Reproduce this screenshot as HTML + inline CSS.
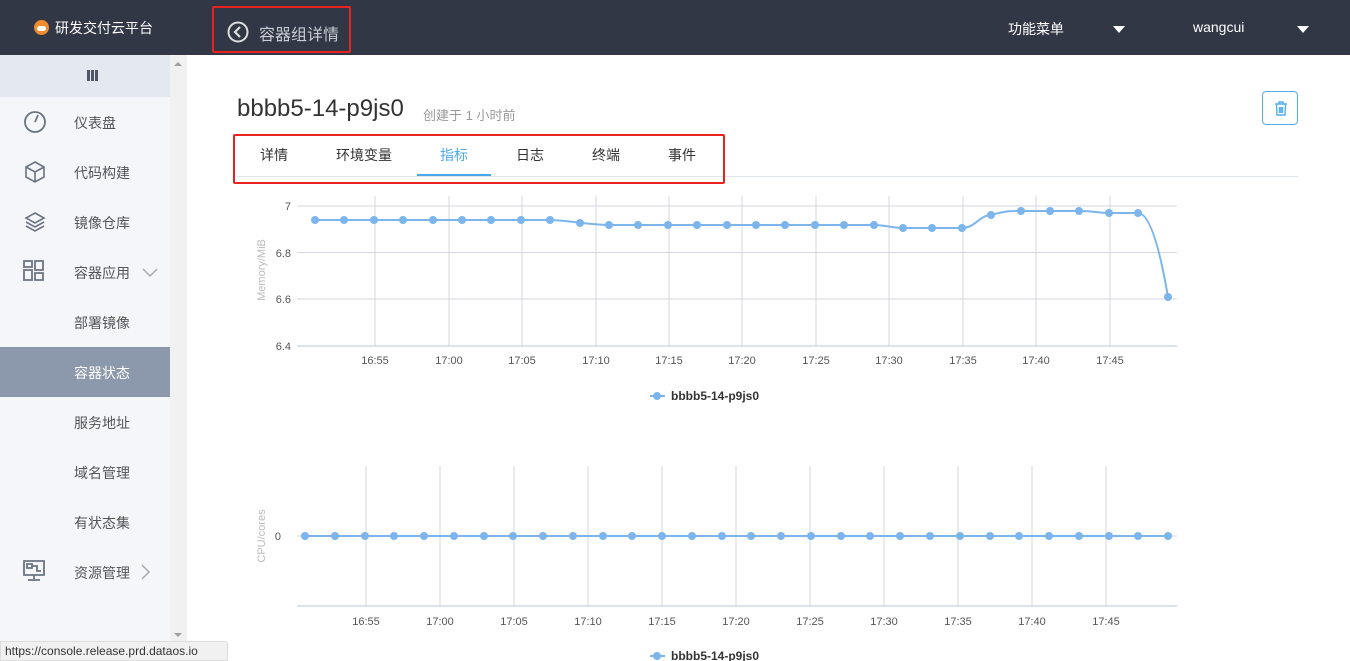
<!DOCTYPE html>
<html><head><meta charset="utf-8"><style>
*{margin:0;padding:0;box-sizing:border-box}
body{width:1350px;height:661px;overflow:hidden;background:#fff;font-family:"Liberation Sans","Noto Sans CJK SC",sans-serif;position:relative}
.top{position:absolute;left:0;top:0;width:1350px;height:55px;background:#323745;color:#fff}
.side{position:absolute;left:0;top:55px;width:170px;height:606px;background:#f4f6fa}
.scroll{position:absolute;left:170px;top:55px;width:17px;height:606px;background:#f1f1f1}
.item{position:absolute;left:74px;font-size:14px;color:#555}
.ico{position:absolute;left:23px}
.abs{position:absolute}
</style></head><body>
<div class="top">
 <div class="abs" style="left:34px;top:20px;width:15px;height:15px;border-radius:50%;background:#f08c2e"><div style="position:absolute;left:3px;top:6px;width:9px;height:5px;background:#fff;border-radius:3px"></div></div>
 <div class="abs" style="left:55px;top:18px;font-size:14px;color:#fff">研发交付云平台</div>
 <div class="abs" style="left:212px;top:6px;width:139px;height:47px;border:2px solid #e8231f;border-radius:2px"></div>
 <svg class="abs" style="left:227px;top:21px" width="22" height="22" viewBox="0 0 22 22"><circle cx="11" cy="11" r="9.5" fill="none" stroke="#ddd" stroke-width="2"/><path d="M13 6 L8 11 L13 16" fill="none" stroke="#ddd" stroke-width="2.2"/></svg>
 <div class="abs" style="left:259px;top:21px;font-size:16px;color:#c9ccd4">容器组详情</div>
 <div class="abs" style="left:1008px;top:19px;font-size:14px">功能菜单</div>
 <div class="abs" style="left:1113px;top:26px;border-left:6px solid transparent;border-right:6px solid transparent;border-top:7px solid #fff"></div>
 <div class="abs" style="left:1193px;top:19px;font-size:14px">wangcui</div>
 <div class="abs" style="left:1297px;top:26px;border-left:6px solid transparent;border-right:6px solid transparent;border-top:7px solid #fff"></div>
</div>
<div class="side">
 <div style="height:42px;background:#e4e8f0;position:relative"><div class="abs" style="left:87px;top:15px;width:3px;height:11px;background:#4f5766;box-shadow:4px 0 #4f5766,8px 0 #4f5766"></div></div>
 <svg class="ico" style="top:55px" width="24" height="24" viewBox="0 0 24 24"><circle cx="12" cy="12" r="10" fill="none" stroke="#6b7483" stroke-width="1.8"/><path d="M12 12 L15 5" stroke="#6b7483" stroke-width="1.8"/></svg>
 <div class="item" style="top:58px">仪表盘</div>
 <svg class="ico" style="top:105px" width="24" height="24" viewBox="0 0 24 24"><path d="M12 2 L21 7 L21 17 L12 22 L3 17 L3 7 Z M3 7 L12 12 L21 7 M12 12 L12 22" fill="none" stroke="#6b7483" stroke-width="1.6"/></svg>
 <div class="item" style="top:108px">代码构建</div>
 <svg class="ico" style="top:155px" width="24" height="24" viewBox="0 0 24 24"><path d="M12 3 L21 8 L12 13 L3 8 Z M3 12 L12 17 L21 12 M3 16 L12 21 L21 16" fill="none" stroke="#6b7483" stroke-width="1.6"/></svg>
 <div class="item" style="top:158px">镜像仓库</div>
 <svg class="ico" style="top:205px" width="22" height="22" viewBox="0 0 22 22"><path d="M1 1 H9 V7 H1 Z M12 1 H20 V10 H12 Z M1 10 H9 V20 H1 Z M12 13 H20 V20 H12 Z" fill="none" stroke="#6b7483" stroke-width="1.8"/></svg>
 <div class="item" style="top:208px">容器应用</div>
 <svg class="abs" style="left:142px;top:213px" width="16" height="10" viewBox="0 0 16 10"><path d="M1 1 L8 8 L15 1" fill="none" stroke="#aaa" stroke-width="1.5"/></svg>
 <div class="item" style="top:258px">部署镜像</div>
 <div style="position:absolute;left:0;top:292px;width:170px;height:50px;background:#8c98ab"></div>
 <div class="item" style="top:308px;color:#fff">容器状态</div>
 <div class="item" style="top:358px">服务地址</div>
 <div class="item" style="top:408px">域名管理</div>
 <div class="item" style="top:458px">有状态集</div>
 <svg class="ico" style="top:505px" width="22" height="22" viewBox="0 0 22 22"><path d="M1 1 H21 V15 H1 Z M11 15 V19 M5 20 H17 M4 4 H9 V8 H4 Z M9 6 H14 V11 H18" fill="none" stroke="#6b7483" stroke-width="1.8"/></svg>
 <div class="item" style="top:508px">资源管理</div>
 <svg class="abs" style="left:141px;top:509px" width="10" height="16" viewBox="0 0 10 16"><path d="M1 1 L8 8 L1 15" fill="none" stroke="#aaa" stroke-width="1.5"/></svg>
</div>
<div class="scroll"><div class="abs" style="left:4px;top:7px;border-left:4px solid transparent;border-right:4px solid transparent;border-bottom:4px solid #a0a0a0"></div><div class="abs" style="left:4px;top:578px;border-left:4px solid transparent;border-right:4px solid transparent;border-top:4px solid #a0a0a0"></div></div>
<div class="abs" style="left:0;top:641px;width:228px;height:20px;background:#f1f1f1;border:1px solid #ddd;border-radius:0 3px 0 0;font-size:12px;color:#333;padding:2px 0 0 4px">https://console.release.prd.dataos.io</div>

<div class="abs" style="left:237px;top:95px;font-size:24px;color:#333">bbbb5-14-p9js0</div>
<div class="abs" style="left:423px;top:105px;font-size:13px;color:#999">创建于 1 小时前</div>
<div class="abs" style="left:1262px;top:91px;width:36px;height:34px;border:1px solid #55aef0;border-radius:4px"><svg style="position:absolute;left:11px;top:9px" width="14" height="15" viewBox="0 0 14 15"><path d="M1 3 H13 M5 3 V1 H9 V3 M2.5 3 L3 14 H11 L11.5 3 M5.5 6 V12 M7 6 V12 M8.5 6 V12" fill="none" stroke="#55aef0" stroke-width="1.4"/></svg></div>
<div class="abs" style="left:236px;top:176px;width:1062px;height:1px;background:#e1e6ee"></div>
<div class="abs" style="left:233px;top:134px;width:492px;height:50px;border:2px solid #e8231f;border-radius:2px"></div>
<div class="abs" style="left:417px;top:174px;width:74px;height:2px;background:#49a9ee"></div>
<div class="abs" style="top:145px;left:260px;font-size:14px;color:#333">详情</div>
<div class="abs" style="top:145px;left:336px;font-size:14px;color:#333">环境变量</div>
<div class="abs" style="top:145px;left:440px;font-size:14px;color:#49a9ee">指标</div>
<div class="abs" style="top:145px;left:516px;font-size:14px;color:#333">日志</div>
<div class="abs" style="top:145px;left:592px;font-size:14px;color:#333">终端</div>
<div class="abs" style="top:145px;left:668px;font-size:14px;color:#333">事件</div>

<svg class="abs" style="left:0;top:0" width="1350" height="661" font-family="Liberation Sans, sans-serif">
 <g stroke="#d4d7dd" stroke-width="1">
  <line x1="297" y1="206" x2="1177" y2="206"/><line x1="297" y1="252.5" x2="1177" y2="252.5"/><line x1="297" y1="299" x2="1177" y2="299"/>
  <line x1="375" y1="196" x2="375" y2="346"/><line x1="449" y1="196" x2="449" y2="346"/><line x1="522" y1="196" x2="522" y2="346"/><line x1="596" y1="196" x2="596" y2="346"/><line x1="669" y1="196" x2="669" y2="346"/><line x1="742" y1="196" x2="742" y2="346"/><line x1="816" y1="196" x2="816" y2="346"/><line x1="889" y1="196" x2="889" y2="346"/><line x1="963" y1="196" x2="963" y2="346"/><line x1="1036" y1="196" x2="1036" y2="346"/><line x1="1110" y1="196" x2="1110" y2="346"/>
  <line x1="366" y1="466" x2="366" y2="606"/><line x1="440" y1="466" x2="440" y2="606"/><line x1="514" y1="466" x2="514" y2="606"/><line x1="588" y1="466" x2="588" y2="606"/><line x1="662" y1="466" x2="662" y2="606"/><line x1="736" y1="466" x2="736" y2="606"/><line x1="810" y1="466" x2="810" y2="606"/><line x1="884" y1="466" x2="884" y2="606"/><line x1="958" y1="466" x2="958" y2="606"/><line x1="1032" y1="466" x2="1032" y2="606"/><line x1="1106" y1="466" x2="1106" y2="606"/>
 </g>
 <line x1="297" y1="346" x2="1177" y2="346" stroke="#b9c7d8"/>
 <line x1="297" y1="606" x2="1177" y2="606" stroke="#b9c7d8"/>
 <line x1="297" y1="536" x2="1177" y2="536" stroke="#d4d7dd"/>
 <g font-size="11" fill="#555" text-anchor="end"><text x="291" y="210">7</text><text x="291" y="257">6.8</text><text x="291" y="303">6.6</text><text x="291" y="350">6.4</text><text x="281" y="540">0</text></g>
 <g font-size="11" fill="#555" text-anchor="middle">
  <text x="375" y="364">16:55</text><text x="449" y="364">17:00</text><text x="522" y="364">17:05</text><text x="596" y="364">17:10</text><text x="669" y="364">17:15</text><text x="742" y="364">17:20</text><text x="816" y="364">17:25</text><text x="889" y="364">17:30</text><text x="963" y="364">17:35</text><text x="1036" y="364">17:40</text><text x="1110" y="364">17:45</text>
  <text x="366" y="625">16:55</text><text x="440" y="625">17:00</text><text x="514" y="625">17:05</text><text x="588" y="625">17:10</text><text x="662" y="625">17:15</text><text x="736" y="625">17:20</text><text x="810" y="625">17:25</text><text x="884" y="625">17:30</text><text x="958" y="625">17:35</text><text x="1032" y="625">17:40</text><text x="1106" y="625">17:45</text>
 </g>
 <text transform="translate(265,270) rotate(-90)" font-size="11" fill="#bbb" text-anchor="middle">Memory/MiB</text>
 <text transform="translate(265,536) rotate(-90)" font-size="11" fill="#bbb" text-anchor="middle">CPU/cores</text>
 <path d="M315,220 L550,220 C565,220 590,225 609,225 L873,225 C885,225 893,228 903,228 L962,228 C975,228 980,215 991,215 C1005,211 1010,211 1021,211 L1079,211 C1095,211 1098,213 1109,213 L1138,213 C1150,213 1160,250 1168,297" fill="none" stroke="#7cb5ec" stroke-width="2"/>
 <g fill="#7cb5ec">
  <circle cx="315" cy="220" r="4"/><circle cx="344" cy="220" r="4"/><circle cx="374" cy="220" r="4"/><circle cx="403" cy="220" r="4"/><circle cx="433" cy="220" r="4"/><circle cx="462" cy="220" r="4"/><circle cx="491" cy="220" r="4"/><circle cx="521" cy="220" r="4"/><circle cx="550" cy="220" r="4"/><circle cx="580" cy="223" r="4"/><circle cx="609" cy="225" r="4"/><circle cx="638" cy="225" r="4"/><circle cx="668" cy="225" r="4"/><circle cx="697" cy="225" r="4"/><circle cx="727" cy="225" r="4"/><circle cx="756" cy="225" r="4"/><circle cx="785" cy="225" r="4"/><circle cx="815" cy="225" r="4"/><circle cx="844" cy="225" r="4"/><circle cx="874" cy="225" r="4"/><circle cx="903" cy="228" r="4"/><circle cx="932" cy="228" r="4"/><circle cx="962" cy="228" r="4"/><circle cx="991" cy="215" r="4"/><circle cx="1021" cy="211" r="4"/><circle cx="1050" cy="211" r="4"/><circle cx="1079" cy="211" r="4"/><circle cx="1109" cy="213" r="4"/><circle cx="1138" cy="213" r="4"/><circle cx="1168" cy="297" r="4"/>
 </g>
 <line x1="305" y1="536" x2="1168" y2="536" stroke="#7cb5ec" stroke-width="2"/>
 <g fill="#7cb5ec">
  <circle cx="305" cy="536" r="4"/><circle cx="335" cy="536" r="4"/><circle cx="365" cy="536" r="4"/><circle cx="394" cy="536" r="4"/><circle cx="424" cy="536" r="4"/><circle cx="454" cy="536" r="4"/><circle cx="484" cy="536" r="4"/><circle cx="513" cy="536" r="4"/><circle cx="543" cy="536" r="4"/><circle cx="573" cy="536" r="4"/><circle cx="603" cy="536" r="4"/><circle cx="632" cy="536" r="4"/><circle cx="662" cy="536" r="4"/><circle cx="692" cy="536" r="4"/><circle cx="722" cy="536" r="4"/><circle cx="751" cy="536" r="4"/><circle cx="781" cy="536" r="4"/><circle cx="811" cy="536" r="4"/><circle cx="841" cy="536" r="4"/><circle cx="870" cy="536" r="4"/><circle cx="900" cy="536" r="4"/><circle cx="930" cy="536" r="4"/><circle cx="960" cy="536" r="4"/><circle cx="990" cy="536" r="4"/><circle cx="1019" cy="536" r="4"/><circle cx="1049" cy="536" r="4"/><circle cx="1079" cy="536" r="4"/><circle cx="1109" cy="536" r="4"/><circle cx="1138" cy="536" r="4"/><circle cx="1168" cy="536" r="4"/>
 </g>
 <line x1="650" y1="396" x2="665" y2="396" stroke="#7cb5ec" stroke-width="2"/><circle cx="657" cy="396" r="4" fill="#7cb5ec"/>
 <text x="671" y="400" font-size="12" font-weight="bold" fill="#333">bbbb5-14-p9js0</text>
 <line x1="650" y1="656" x2="665" y2="656" stroke="#7cb5ec" stroke-width="2"/><circle cx="657" cy="656" r="4" fill="#7cb5ec"/>
 <text x="671" y="660" font-size="12" font-weight="bold" fill="#333">bbbb5-14-p9js0</text>
</svg>
</body></html>
